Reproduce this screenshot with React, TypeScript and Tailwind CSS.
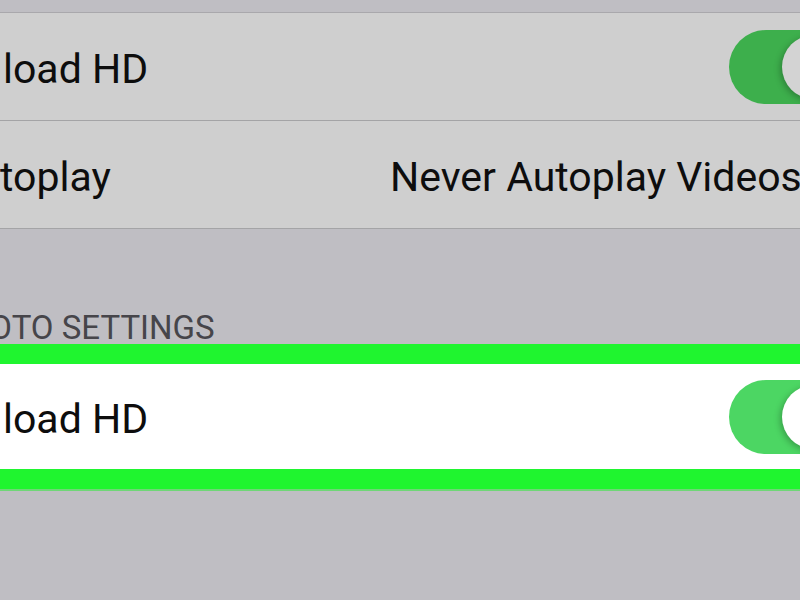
import React from "react";

function Toggle({ dim }: { dim?: boolean }) {
  return (
    <div
      className={
        "ml-auto mr-[-51px] flex h-[74px] w-[122px] shrink-0 items-center justify-end rounded-full pr-[5px] " +
        (dim ? "bg-[#3daf4c]" : "bg-[#4cd663]")
      }
    >
      <div
        className={
          "h-[64px] w-[64px] rounded-full shadow-[-2px_2px_6px_rgba(0,0,0,0.25)] " +
          (dim ? "bg-[#d3d3d3]" : "bg-white")
        }
      />
    </div>
  );
}

export default function App() {
  return (
    <div
      className="flex h-[600px] w-[800px] flex-col overflow-hidden bg-[#bfbec3]"
      style={{ fontFamily: "Roboto, 'Liberation Sans', sans-serif" }}
    >
      <div className="h-[13px] shrink-0 border-b border-[#a9a8ac] bg-[#bfbec3]" />
      <div className="flex h-[108px] shrink-0 items-center overflow-hidden border-b border-[#a4a4a6] bg-[#cfcfcf] pl-[3px] text-[41px] text-[#0d0d0d]">
        <span className="whitespace-nowrap pt-[6px]">load HD</span>
        <Toggle dim />
      </div>
      <div className="flex h-[108px] shrink-0 items-center overflow-hidden border-b border-[#a4a4a6] bg-[#cfcfcf] text-[41px] text-[#0d0d0d]">
        <span className="w-[390px] shrink-0 whitespace-nowrap pt-[6px]">toplay</span>
        <span className="whitespace-nowrap pt-[6px]">Never Autoplay Videos</span>
      </div>
      <div className="flex h-[115px] shrink-0 items-end overflow-hidden">
        <span className="ml-[-55px] whitespace-nowrap text-[33px] leading-none text-[#46454a]">
          PHOTO SETTINGS
        </span>
      </div>
      <div className="shrink-0 border-y-[20px] border-[#1ff52f]">
        <div className="flex h-[105px] items-center overflow-hidden bg-white pl-[3px] text-[41px] text-[#0d0d0d]">
          <span className="whitespace-nowrap pt-[6px]">load HD</span>
          <Toggle />
        </div>
      </div>
      <div className="h-[2px] shrink-0 bg-[#6fd677]" />
      <div className="flex-1 bg-[#bfbec3]" />
    </div>
  );
}
